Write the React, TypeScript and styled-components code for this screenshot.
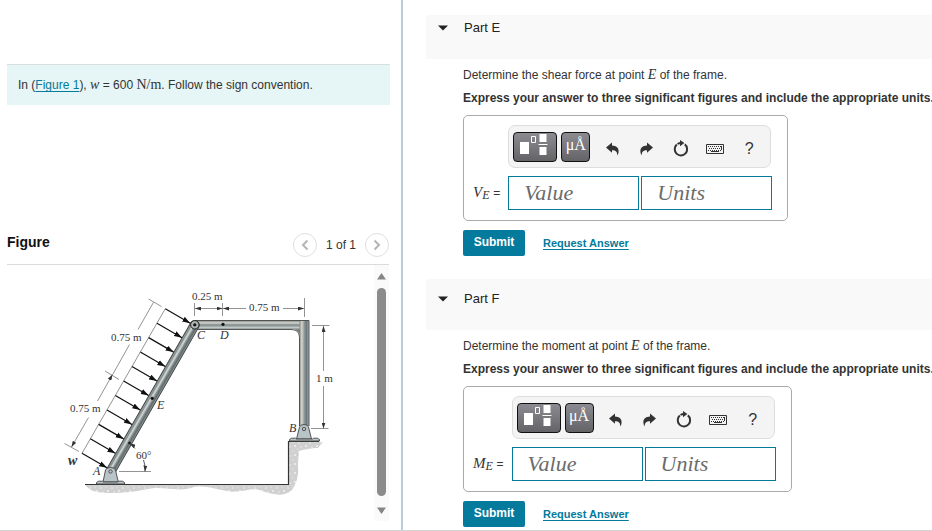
import React from "react";
import styled, { createGlobalStyle } from "styled-components";

const sans = '"Liberation Sans", Arial, sans-serif';
const serif = '"Liberation Serif", "Times New Roman", serif';
const teal = "#047a9c";

const GlobalStyle = createGlobalStyle`
  * { box-sizing: border-box; }
  body { margin: 0; background: #fff; color: #333; font: 12px/16px ${sans}; }
  button, input { font-family: inherit; }
`;

const Page = styled.div`
  display: grid;
  grid-template-columns: minmax(0, 403fr) minmax(0, 529fr);
  min-height: 100vh;
  border-bottom: 1px solid #d4d4d4;
`;

const LeftPane = styled.section`
  display: flex;
  flex-direction: column;
  padding: 64px 11px 9px 7px;
  border-right: 2px solid #b9cde0;
`;

const Prompt = styled.p`
  margin: 0;
  padding: 12px 11px;
  border-top: 1px solid #d8dedb;
  background: #e6f5f5;
`;

const TextLink = styled.a<{ $strong?: boolean }>`
  color: ${teal};
  text-decoration: underline;
  text-underline-offset: 2px;
  font-size: ${(p) => (p.$strong ? "11px" : "12px")};
  font-weight: ${(p) => (p.$strong ? 700 : 400)};
`;

const MathText = styled.span<{ $italic?: boolean }>`
  font-family: ${serif};
  font-size: 14px;
  line-height: 14px;
  font-style: ${(p) => (p.$italic ? "italic" : "normal")};
`;

const FigureHead = styled.header`
  display: flex;
  align-items: flex-start;
  justify-content: space-between;
  margin: 128px 1px 0 0;
  height: 32px;
  border-bottom: 1px solid #d9dcdc;
`;

const FigureTitle = styled.h2`
  margin: 0;
  color: #111;
  font-size: 14px;
  line-height: 18px;
`;

const Pager = styled.nav`
  display: flex;
  align-items: center;
  gap: 9px;
`;

const RoundButton = styled.button`
  display: grid;
  place-items: center;
  width: 24px;
  height: 24px;
  padding: 0;
  border: 1px solid #dfdfdf;
  border-radius: 50%;
  background: #fff;
  color: #b5b5b5;
`;

const FigureArea = styled.div`
  display: flex;
  justify-content: space-between;
  margin-right: 1px;
`;

const Drawing = styled.svg`
  flex: 0 1 367px;
  min-width: 0;
  height: 256px;
`;

const ScrollTrack = styled.div`
  display: flex;
  flex-direction: column;
  align-items: center;
  gap: 8px;
  width: 15px;
  padding: 8px 0 7px;
  background: #fafafa;
`;

const ScrollThumb = styled.div`
  flex: 1;
  width: 9px;
  margin-bottom: 3px;
  border-radius: 5px;
  background: #8b8b8b;
`;

const RightPane = styled.main`
  padding: 15px 0 0 23px;
`;

const Part = styled.section`
  & + & { margin-top: 23px; }
`;

const PartHead = styled.header<{ $compact?: boolean }>`
  display: flex;
  align-items: center;
  height: ${(p) => (p.$compact ? "44px" : "51px")};
  padding: 0 12px ${(p) => (p.$compact ? "18px" : "12px")};
  background: #f9f9f9;
`;

const ToggleButton = styled.button`
  display: flex;
  align-items: center;
  gap: 16px;
  padding: 0;
  border: 0;
  background: none;
  color: #222;
  font-size: 13px;
  line-height: 18px;
`;

const PartBody = styled.div`
  padding: 8px 0 0 37px;
`;

const Line = styled.p<{ $strong?: boolean }>`
  margin: 0 0 ${(p) => (p.$strong ? "9px" : "7px")};
  white-space: nowrap;
  font-weight: ${(p) => (p.$strong ? 700 : 400)};
`;

const AnswerBox = styled.div`
  display: inline-grid;
  grid-template-columns: auto auto;
  align-items: center;
  column-gap: 8px;
  row-gap: 8px;
  padding: 9px 15px 10px 9px;
  border: 1px solid #aaa;
  border-radius: 5px;
  vertical-align: top;
`;

const Toolbar = styled.div`
  grid-column: 2;
  display: flex;
  align-items: center;
  gap: 4px;
  width: 263px;
  height: 43px;
  padding: 0 4px;
  border: 1px solid #ddd;
  border-radius: 7px;
  background: #f4f4f4;
`;

const DarkButton = styled.button<{ $wide?: boolean }>`
  display: grid;
  place-items: start center;
  width: ${(p) => (p.$wide ? "44px" : "29px")};
  height: 30px;
  padding: ${(p) => (p.$wide ? "0" : "2px 0 0")};
  border: 1px solid #111;
  border-radius: 4px;
  background: linear-gradient(#8c8b92, #646467);
  color: #fff;
  font-family: ${serif};
  font-size: 16px;
  line-height: 20px;
`;

const ToolIcons = styled.div`
  flex: 1;
  display: flex;
  align-items: center;
  justify-content: space-between;
  padding: 4px 8px 0 9px;
`;

const ToolButton = styled.button`
  display: grid;
  place-items: center;
  width: 18px;
  height: 20px;
  padding: 0;
  border: 0;
  background: none;
  color: #333;
  font-size: 16px;
`;

const FieldLabel = styled.label`
  font-family: ${serif};
  font-size: 15px;
  font-style: italic;
  white-space: nowrap;
`;

const Subscript = styled.span`
  font-size: 12px;
  vertical-align: -2px;
`;

const Equals = styled.span`
  font: 12px ${sans};
`;

const Fields = styled.div`
  display: flex;
  gap: 2px;
`;

const Field = styled.input`
  width: 131px;
  height: 34px;
  padding: 0 15px;
  border: 1px solid ${teal};
  border-radius: 0;
  background: #fff;
  font: italic 22px ${serif};
  &::placeholder { color: #6b6b6b; opacity: 1; }
`;

const Actions = styled.div`
  display: flex;
  align-items: center;
  gap: 18px;
  margin-top: 9px;
`;

const SubmitButton = styled.button`
  width: 62px;
  height: 26px;
  padding: 0 0 2px;
  border: 0;
  border-radius: 2px;
  background: ${teal};
  color: #fff;
  font-size: 12px;
  font-weight: 700;
`;

const Chevron = ({ right = false }: { right?: boolean }) => (
  <svg width="8" height="12" viewBox="0 0 8 12" fill="none" stroke="currentColor" strokeWidth="2" aria-hidden="true">
    <path d={right ? "M1.5 1.5 6 6l-4.5 4.5" : "M6.5 1.5 2 6l4.5 4.5"} />
  </svg>
);

const Triangle = ({ up = false }: { up?: boolean }) => (
  <svg width="9" height="7" viewBox="0 0 9 7" fill="#858585" aria-hidden="true">
    <path d={up ? "M4.5 0 9 6.5H0z" : "M0 .5h9L4.5 7z"} />
  </svg>
);

const TemplateIcon = () => (
  <svg width="30" height="24" viewBox="0 0 30 24" fill="none" aria-hidden="true">
    <path d="M0 9h9v12H0z" fill="#fff" />
    <path d="M11.5 3.500h4v6h-4z" stroke="#fff" />
    <path d="M19.500 1h7v8h-7zM19.500 14h7v8h-7z" fill="#fff" />
    <path d="M18.500 11.500h9" stroke="#fff" />
  </svg>
);

const CurvedArrow = ({ forward = false }: { forward?: boolean }) => (
  <svg width="13" height="14" viewBox="0 0 13 14" fill="currentColor" aria-hidden="true">
    <path
      transform={forward ? "matrix(-1 0 0 1 13 0)" : undefined}
      d="M0 5.4 6 .6v2.9c4.3.1 6.8 2.3 6.6 6.2 0 1.3-.5 2.5-1.4 3.7.3-3.3-1.4-5.1-5.2-5.1v2.5z"
    />
  </svg>
);

const ResetIcon = () => (
  <svg width="16" height="17" viewBox="0 0 16 17" fill="none" aria-hidden="true">
    <path d="M3.800 4.600a6.200 6.200 0 1 0 8 -.2" stroke="#333" strokeWidth="2" />
    <path d="M7 0v6.200L11.400 3z" fill="#333" />
    <path d="M4.500 3.900Q6 3 8 3" stroke="#333" strokeWidth="1.800" />
  </svg>
);

const KeyboardIcon = () => (
  <svg width="18" height="10" viewBox="0 0 18 10" fill="none" stroke="#333" aria-hidden="true">
    <path d="M.5.5h17v9H.5z" />
    <path d="M2 2.500h13M3 4.500h12M2 6.500h13" strokeDasharray="1 1" />
    <path d="M5 7.500h8M15.500 2v4" />
  </svg>
);

const loads = Array.from({ length: 11 }, (_, i) => ({ x: 165.3 - i * 8.33, y: 308.7 + i * 14.46 }));

function FrameDrawing() {
  return (
    <Drawing viewBox="7 265 367 256" preserveAspectRatio="xMinYMin meet" role="img" aria-label="Frame loaded along member AC">
      <defs>
        <linearGradient id="beam" x1="0" y1="320" x2="0" y2="330" gradientUnits="userSpaceOnUse">
          <stop offset="0" stopColor="#777" />
          <stop offset=".3" stopColor="#d3d6d0" />
          <stop offset=".5" stopColor="#7d8788" />
          <stop offset=".75" stopColor="#c0c8c8" />
          <stop offset="1" stopColor="#727878" />
        </linearGradient>
        <linearGradient id="column" x1="299" y1="0" x2="310" y2="0" gradientUnits="userSpaceOnUse">
          <stop offset="0" stopColor="#777" />
          <stop offset=".25" stopColor="#d6d6cd" />
          <stop offset=".5" stopColor="#8e9494" />
          <stop offset=".7" stopColor="#65777e" />
          <stop offset=".85" stopColor="#a5b3b9" />
          <stop offset="1" stopColor="#555" />
        </linearGradient>
        <pattern id="soil" width="11" height="9" patternUnits="userSpaceOnUse">
          <path d="M0 0h11v9H0z" fill="#d0d0d0" />
          <g fill="#f4f4f4">
            <circle cx="2" cy="2" r=".8" />
            <circle cx="7" cy="1" r=".6" />
            <circle cx="9" cy="5" r=".9" />
            <circle cx="4" cy="6" r=".7" />
            <circle cx="1" cy="8" r=".6" />
          </g>
        </pattern>
        <filter id="soften" x="-5%" y="-20%" width="110%" height="140%">
          <feGaussianBlur stdDeviation=".7" />
        </filter>
        <marker id="head" viewBox="0 0 8 6" refX="8" refY="3" markerWidth="8" markerHeight="6" markerUnits="userSpaceOnUse" orient="auto">
          <path d="M0 .3 8 3 0 5.700z" fill="#111" />
        </marker>
        <marker id="dim" viewBox="0 0 6 4" refX="6" refY="2" markerWidth="6" markerHeight="4" markerUnits="userSpaceOnUse" orient="auto-start-reverse">
          <path d="M0 0 6 2 0 4z" fill="#333" />
        </marker>
      </defs>

      <path
        d="M85 485h203v-43h35l-5 6c-7 0-15 2-19 3l-1 14c1 8-1 18-6 25-8 7-18 5-30 1-10-5-20 3-35 0-12-2-25-7-36-3-14 4-30-2-43 1-18 4-38 5-50 3-7-1-10-4-13-7z"
        fill="url(#soil)"
        filter="url(#soften)"
      />
      <path d="M85 484.500h203.500V441.500H319" fill="none" stroke="#333" strokeWidth="1.200" />

      <path d="M299.500 322h9.500v104h-9.500z" fill="url(#column)" />
      <path d="M195 320.500h105v15q-1-6-8-6.500h-97z" fill="url(#beam)" />
      <path d="M299.500 320.500h9.500v10h-9.500z" fill="url(#column)" />
      <path d="M195 320.500h114V426M195 329.500h96q8.500 0 8.500 8V426" fill="none" stroke="#444" strokeWidth=".9" />

      <path d="M110.500 471.500 194.700 325" stroke="#3d4242" strokeWidth="10" strokeLinecap="round" />
      <path d="M110.500 471.500 194.700 325" stroke="#8a9292" strokeWidth="8.400" strokeLinecap="round" />
      <path d="m109.600 471 84.200-146.500" stroke="#c9cfcd" strokeWidth="2" />
      <path d="m112.600 472.500 84.200-146.500" stroke="#687172" strokeWidth="2" />
      <circle cx="194.800" cy="324.800" r="4.200" fill="#aeb4b3" stroke="#222" />
      <circle cx="194.800" cy="324.800" r="1.600" fill="#111" />
      <circle cx="223" cy="324.300" r="1.600" fill="#111" />
      <circle cx="152.200" cy="398.300" r="1.600" fill="#111" />
      <circle cx="129.500" cy="443" r="1.300" fill="#111" />

      <g fill="#b9c4c8" stroke="#444" strokeWidth=".9">
        <path d="M103 482l2.500-12q1-2.500 5-2.500t5 2.500l2.800 12z" />
        <circle cx="110.500" cy="471.500" r="1.700" />
        <path d="M96.500 484v-1.500l2-1.300h4l1 .8h14l1-.8h4l2 1.300v1.500z" />
        <path d="M296.500 439l3-12q1-2.500 4.500-2.500t4.500 2.500l3 12z" />
        <circle cx="304" cy="429" r="1.700" />
        <path d="M289.500 441v-1.500l2-1.300h4l1 .8h16l1-.8h4l2 1.300v1.500z" />
      </g>

      <path d="M165.300 308.700 82 453.300" stroke="#777" strokeWidth=".8" />
      {loads.map((p) => (
        <path key={p.y} d={`M${p.x} ${p.y}l25 14.500`} stroke="#111" strokeWidth="1.200" markerEnd="url(#head)" />
      ))}

      <g stroke="#777" strokeWidth=".8" fill="none">
        <path d="M148.500 299l13 7.500M105 371l14 8.500M64.500 443.500l14.500 8" />
        <path d="M138 329.500l15.500-27.200M97.500 401l15-26.500" markerEnd="url(#dim)" />
        <path d="M129.500 344.500l-16.800 30M88.500 417.500l-17 29.500" markerEnd="url(#dim)" />
        <path d="M194.500 303v13M222.500 303v13M304.500 298v19M312 325.500h17.500M311 428.500h17.500M119 471.500h32" />
        <path d="M195 308.500h27.500" markerStart="url(#dim)" markerEnd="url(#dim)" />
        <path d="M246 308.500h-23" markerEnd="url(#dim)" />
        <path d="M283 308.500h21" markerEnd="url(#dim)" />
        <path d="M323.500 371v-45" markerEnd="url(#dim)" />
        <path d="M323.500 386v42.500" markerEnd="url(#dim)" />
        <path d="M135 448.500q-2-3-5.500-5" stroke="#333" markerEnd="url(#dim)" />
        <path d="M143.500 460q2 5 1.500 11.500" stroke="#333" markerEnd="url(#dim)" />
      </g>

      <g fill="#333" fontFamily={serif} fontSize="11">
        <text x="192" y="300">0.25 m</text>
        <text x="249" y="311">0.75 m</text>
        <text x="111" y="341">0.75 m</text>
        <text x="70" y="412">0.75 m</text>
        <text x="316" y="382">1 m</text>
        <text x="136" y="459">60°</text>
        <g fontStyle="italic" fontSize="12">
          <text x="197" y="339">C</text>
          <text x="220" y="339">D</text>
          <text x="157" y="409">E</text>
          <text x="289" y="432">B</text>
          <text x="93" y="475">A</text>
          <text x="68" y="465" fontSize="14" fontWeight="700">w</text>
        </g>
      </g>
    </Drawing>
  );
}

interface PartProps {
  letter: string;
  quantity: string;
  symbol: string;
  compact?: boolean;
}

function PartSection({ letter, quantity, symbol, compact }: PartProps) {
  const valueId = `value-${letter}`;
  return (
    <Part>
      <PartHead $compact={compact}>
        <ToggleButton aria-expanded="true">
          <svg width="10" height="6" viewBox="0 0 10 6" aria-hidden="true">
            <path d="M0 .5h10L5 5.500z" fill="#222" />
          </svg>
          Part {letter}
        </ToggleButton>
      </PartHead>
      <PartBody>
        <Line>
          Determine the {quantity} at point <MathText $italic>E</MathText> of the frame.
        </Line>
        <Line $strong>Express your answer to three significant figures and include the appropriate units.</Line>
        <AnswerBox>
          <Toolbar role="toolbar" aria-label="Equation tools">
            <DarkButton $wide aria-label="Templates"><TemplateIcon /></DarkButton>
            <DarkButton aria-label="Symbols">μÅ</DarkButton>
            <ToolIcons>
              <ToolButton aria-label="Undo"><CurvedArrow /></ToolButton>
              <ToolButton aria-label="Redo"><CurvedArrow forward /></ToolButton>
              <ToolButton aria-label="Reset"><ResetIcon /></ToolButton>
              <ToolButton aria-label="Keyboard shortcuts"><KeyboardIcon /></ToolButton>
              <ToolButton aria-label="Help">?</ToolButton>
            </ToolIcons>
          </Toolbar>
          <FieldLabel htmlFor={valueId}>
            {symbol}<Subscript>E</Subscript> <Equals>=</Equals>
          </FieldLabel>
          <Fields>
            <Field id={valueId} placeholder="Value" />
            <Field aria-label="Units" placeholder="Units" />
          </Fields>
        </AnswerBox>
        <Actions>
          <SubmitButton>Submit</SubmitButton>
          <TextLink $strong href="#request">Request Answer</TextLink>
        </Actions>
      </PartBody>
    </Part>
  );
}

export default function App() {
  return (
    <>
      <GlobalStyle />
      <Page>
        <LeftPane>
          <Prompt>
            In (<TextLink href="#figure">Figure 1</TextLink>), <MathText $italic>w</MathText> = 600{" "}
            <MathText>N/m</MathText>. Follow the sign convention.
          </Prompt>
          <FigureHead id="figure">
            <FigureTitle>Figure</FigureTitle>
            <Pager aria-label="Figures">
              <RoundButton aria-label="Previous figure"><Chevron /></RoundButton>
              <span>1 of 1</span>
              <RoundButton aria-label="Next figure"><Chevron right /></RoundButton>
            </Pager>
          </FigureHead>
          <FigureArea>
            <FrameDrawing />
            <ScrollTrack aria-hidden="true">
              <Triangle up />
              <ScrollThumb />
              <Triangle />
            </ScrollTrack>
          </FigureArea>
        </LeftPane>
        <RightPane>
          <PartSection letter="E" quantity="shear force" symbol="V" compact />
          <PartSection letter="F" quantity="moment" symbol="M" />
        </RightPane>
      </Page>
    </>
  );
}
